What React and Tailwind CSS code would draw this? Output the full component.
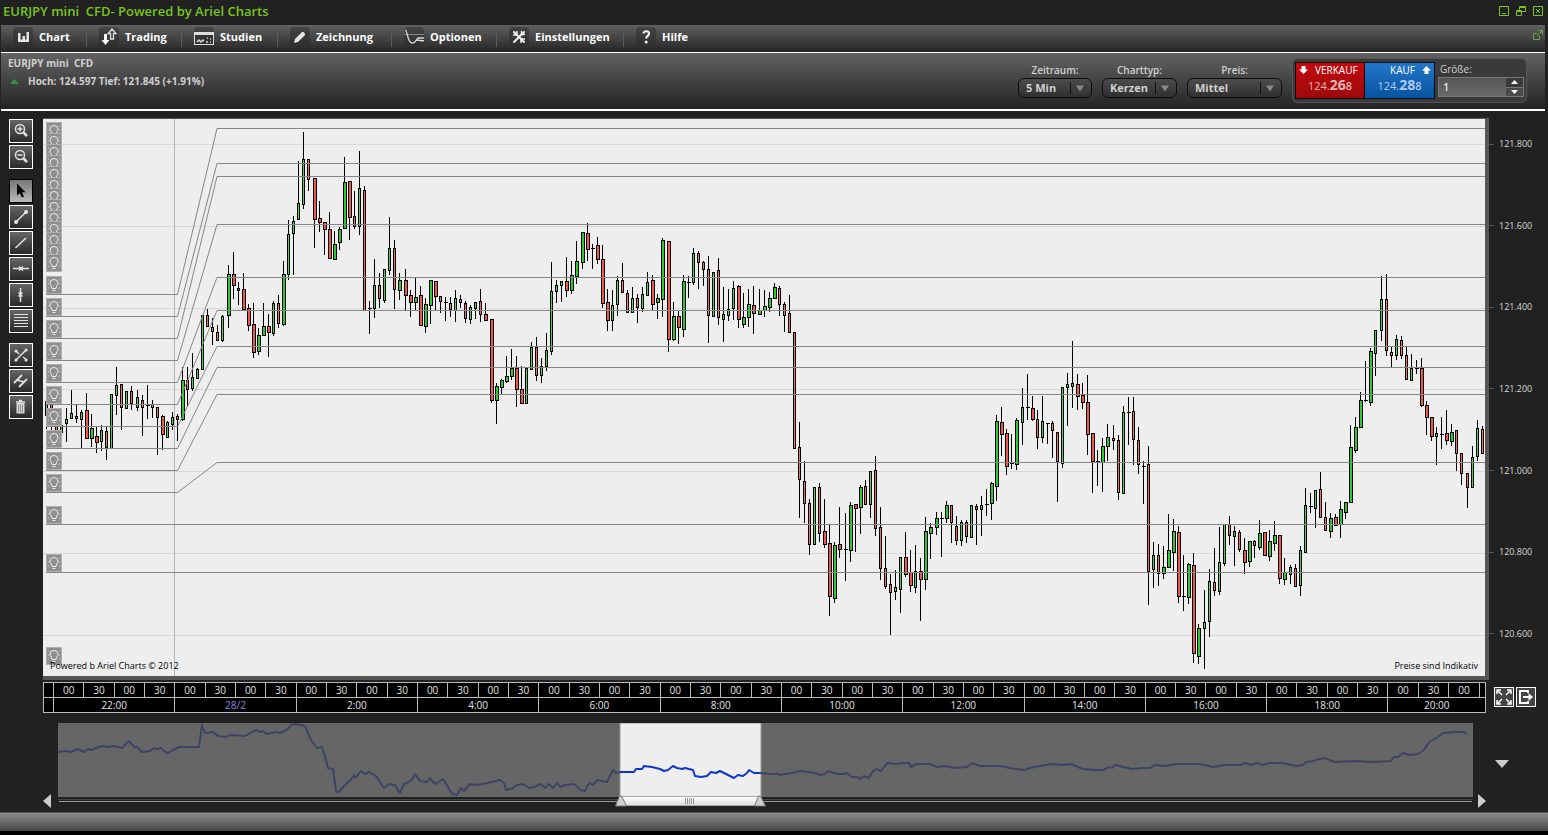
import { useState } from 'react'

// high, body top, body bottom, low, kind (g/r = up/down, capitals = wide body, d = doji)
const candleData = `
401 401 415 428 g,400 402 425 431 r,410 412 432 433 r,424 425 432 432 g,408 419 423 441 g,390 413 418 418 g,405 416 418 422 r,410 412 419 448 g,
393 410 438 438 R,414 428 438 446 G,427 436 442 452 R,425 430 441 450 g,427 431 447 459 r,394 394 448 448 g,367 385 395 414 g,384 384 407 429 r,
391 391 408 408 g,386 391 403 409 r,390 397 407 410 g,395 400 407 435 r,385 405 405 419 d,400 404 407 417 r,407 407 417 454 r,415 416 434 449 R,
421 422 437 437 g,412 417 424 429 g,414 416 419 440 r,367 380 419 420 G,367 380 389 406 r,353 377 388 390 g,368 369 378 378 g,315 315 369 369 g,
309 315 326 326 r,318 327 331 344 r,325 332 340 340 r,315 316 340 341 g,265 274 315 327 G,252 274 285 298 R,282 288 290 304 r,273 289 309 309 R,
304 308 325 330 R,303 324 352 357 R,328 335 351 354 G,303 326 335 335 G,314 326 332 356 R,301 303 333 335 g,295 303 323 327 r,261 274 324 325 G,
220 234 274 279 g,216 221 233 274 g,161 203 219 219 g,132 159 204 208 g,159 159 179 190 r,178 178 219 247 R,201 218 222 231 R,222 222 229 254 R,
212 229 258 258 R,231 244 259 259 G,227 229 242 249 G,157 182 228 228 G,181 181 217 239 R,191 216 226 228 r,151 188 226 234 g,186 190 310 310 r,
301 308 308 334 d,259 285 308 317 g,273 285 298 307 r,269 269 300 302 g,217 248 270 274 g,240 248 289 308 r,273 280 290 299 G,269 280 295 309 R,
290 295 302 316 R,278 297 302 309 G,286 295 325 325 R,298 304 326 332 G,280 280 305 323 G,281 281 296 310 R,296 296 301 312 r,297 302 302 321 d,
297 303 309 316 r,290 298 310 321 g,295 299 302 307 r,301 303 318 322 r,305 307 319 323 g,302 302 308 318 g,289 301 314 321 r,303 314 320 320 R,
319 319 400 402 R,383 386 400 423 G,379 380 387 394 G,356 376 381 382 G,349 368 376 379 G,356 368 389 406 R,366 389 403 403 R,368 368 403 403 g,
342 347 369 369 g,337 347 375 380 r,358 366 375 382 g,333 350 366 370 g,262 291 351 354 g,280 285 291 302 g,281 281 285 301 g,257 281 290 296 R,
261 275 290 293 G,241 261 276 283 G,232 232 262 268 G,223 233 249 260 R,244 248 248 269 d,237 245 259 263 R,245 259 303 307 R,289 302 320 330 R,
290 305 320 330 g,276 280 304 315 g,263 280 292 292 r,290 293 312 312 r,287 298 312 312 g,294 298 307 322 r,287 294 308 311 g,272 282 295 295 g,
275 280 304 309 R,294 298 302 318 G,238 240 299 316 G,241 241 339 351 R,302 316 339 340 G,311 316 327 343 R,275 281 329 336 G,276 282 282 298 d,
248 253 282 284 g,251 253 262 288 r,261 262 269 285 r,256 269 315 342 r,272 272 316 316 g,258 270 317 324 r,287 314 319 341 g,289 309 315 320 g,
281 288 308 319 g,285 286 319 327 R,293 317 324 327 G,289 304 317 326 G,286 305 313 333 R,289 310 314 314 G,290 306 310 316 G,292 298 307 311 G,
283 287 298 298 G,286 288 304 315 r,302 304 315 331 r,295 313 332 332 r,332 332 448 448 r,422 447 479 517 r,461 481 503 522 r,499 503 544 554 r,
487 487 544 544 g,483 487 533 541 r,499 531 544 547 R,524 543 596 615 R,542 545 598 602 G,507 544 549 557 R,513 549 549 581 d,502 505 550 561 G,
504 504 508 551 R,485 487 507 533 G,480 486 504 504 r,471 471 504 517 g,456 470 528 535 r,507 527 568 579 r,536 568 586 588 r,574 584 592 634 r,
570 587 591 599 g,557 557 589 612 g,532 557 574 576 R,550 572 585 591 R,545 571 587 592 g,558 571 579 620 R,517 531 579 589 G,523 527 533 558 G,
512 518 527 534 G,512 518 518 557 d,501 505 518 522 G,505 505 522 542 r,516 526 540 544 r,520 522 540 545 g,520 522 536 542 r,505 505 537 537 g,
504 506 509 544 r,496 505 509 535 g,489 504 504 516 d,482 483 503 519 G,415 421 486 500 G,407 422 434 455 R,429 433 466 474 R,434 463 463 469 d,
418 420 464 469 G,388 407 422 444 g,374 407 407 420 d,396 408 419 420 R,410 419 437 448 r,396 421 437 442 g,423 423 423 444 d,421 423 430 457 r,
432 432 461 501 r,387 387 463 467 g,373 384 387 425 g,341 383 386 407 g,374 384 396 409 R,383 395 402 408 R,375 402 434 454 R,433 433 461 492 R,
450 461 461 486 d,438 446 462 491 G,424 437 446 460 G,425 438 440 449 r,435 440 492 499 r,406 412 493 493 g,397 412 412 445 d,397 411 439 464 r,
427 440 464 473 r,461 466 466 504 d,446 464 571 604 r,542 555 569 587 g,544 555 573 585 r,546 567 573 578 G,514 550 567 567 G,519 531 552 570 G,
526 532 596 602 R,555 596 596 611 d,563 564 597 603 G,553 565 653 662 R,624 628 656 663 G,590 622 628 668 g,569 581 621 636 g,548 582 590 595 r,
527 562 591 594 g,524 524 563 565 g,516 524 535 544 r,526 531 536 565 g,530 532 549 551 r,538 550 562 573 R,541 541 561 566 G,540 541 545 557 r,
520 533 547 549 G,532 532 555 555 R,530 541 556 560 G,521 535 543 550 G,535 535 578 583 R,558 572 579 584 G,565 567 574 583 g,564 568 586 586 r,
546 550 585 595 g,488 505 552 552 g,493 506 506 513 d,490 490 508 527 g,472 489 517 517 r,502 517 530 530 r,513 518 531 537 G,514 517 525 525 R,
501 509 524 537 G,502 502 512 518 G,425 447 502 502 G,417 427 450 452 G,392 400 427 427 G,361 400 400 402 d,348 351 402 405 G,330 330 353 375 g,
276 299 330 340 g,274 299 350 355 r,347 352 355 366 r,335 339 355 359 g,336 340 355 358 r,347 355 379 379 r,354 368 380 380 g,360 368 368 374 d,
358 368 405 406 R,401 405 417 434 R,417 417 436 440 R,427 433 436 464 g,417 434 434 449 d,410 433 440 444 R,424 432 441 445 G,430 430 453 470 r,
453 453 473 484 r,473 473 487 507 r,446 457 487 487 g,420 428 456 460 g,426 429 453 453 r`

const candles = candleData.trim().split(',').map((row, i) => {
  const [high, top, bottom, low, kind] = row.trim().split(' ')
  return { x: Math.floor(46 + i * 5.057), high: +high, top: +top, bottom: +bottom, low: +low, kind }
})

const candleFill = { g: '#4ed257', G: '#2bcb30', r: '#f0716b', R: '#ee5650' }

// left level, right level
const pivots = [
  [294, 128], [316, 163], [338, 176], [360, 224], [382, 277],
  [404, 310], [426, 346], [448, 367], [470, 394], [492, 462]
]

const bulbs = [
  122, 133, 144, 155, 166, 177, 188, 199, 210, 221, 232, 243, 254,
  276, 298, 320, 342, 364, 386, 408, 430, 452, 474, 506, 554, 647
]

const gridLines = [144, 226, 308, 389, 471, 553, 635]
const prices = ['121.800', '121.600', '121.400', '121.200', '121.000', '120.800', '120.600']
const hours = ['22:00', '28/2', '2:00', '4:00', '6:00', '8:00', '10:00', '12:00', '14:00', '16:00', '18:00', '20:00']

const overviewLeft = '58,752 67,751 71,752 78,749 84,752 88,749 91,750 99,747 103,746 107,747 114,746 122,748 129,741 134,747 137,747 142,752 150,751 154,748 158,749 161,748 164,751 168,753 173,750 179,747 190,747 199,747 202,725 205,733 213,732 218,736 225,737 231,735 245,736 252,732 257,730 260,732 263,731 266,734 271,733 276,732 280,733 288,729 291,725 296,724 305,726 311,740 317,748 322,747 325,756 328,768 333,769 336,791 339,792 344,786 348,782 350,781 354,775 355,778 358,775 361,771 365,774 369,772 376,776 380,782 384,788 389,784 395,785 400,793 404,784 409,782 413,778 415,774 420,781 427,782 430,778 435,784 440,781 443,779 448,787 452,794 457,795 461,788 464,791 470,784 475,785 483,784 500,780 504,783 506,790 513,788 517,785 523,784 529,788 534,787 541,784 545,788 549,784 553,788 557,783 560,787 565,785 574,784 581,790 585,791 588,785 590,783 593,785 597,780 607,782 610,776 613,770 616,773 620,772'
const overviewSelected = '620,772 634,772 636,769 642,769 644,766 652,767 660,769 664,771 668,770 673,766 677,768 682,769 685,768 693,770 695,776 701,777 707,776 711,772 716,773 720,771 724,773 728,775 730,776 734,778 738,775 743,776 747,773 749,770 754,773 760,773'
const overviewRight = '760,773 770,774 778,774 780,775 785,774 792,773 800,771 810,772 815,773 820,775 825,774 828,771 834,773 840,774 844,774 847,773 852,777 858,777 860,779 864,776 869,778 873,771 876,769 881,771 887,763 895,764 905,763 909,763 911,767 917,764 930,764 937,767 945,766 954,768 967,767 972,763 980,766 993,766 1001,766 1005,767 1015,769 1025,770 1030,768 1040,766 1052,764 1062,765 1071,764 1078,767 1083,769 1095,770 1103,770 1109,767 1112,768 1115,765 1124,767 1132,769 1142,768 1150,768 1155,765 1165,766 1176,764 1190,764 1200,764 1213,767 1225,765 1240,765 1246,763 1251,765 1257,763 1262,765 1270,763 1282,763 1296,766 1303,765 1306,762 1313,761 1324,758 1335,762 1355,761 1372,762 1391,761 1394,757 1398,757 1403,753 1410,755 1418,754 1424,750 1429,742 1438,737 1443,733 1455,732 1463,732 1467,734'

const menu = [
  {
    name: 'Chart',
    width: 'w-[85px]',
    icon: <path d="M5 6v9h11V5h-2.500v7.500h-1.500V9H9.500v3.500H7.500V6z" fill="#e4e4e4" />
  },
  {
    name: 'Trading',
    width: 'w-[95px]',
    icon: (
      <>
        <path d="M5 7h3v6h2.500L6.500 18 2.500 13H5z" fill="#fff" />
        <path d="M11.500 12V6.500H9L13 2l4 4.500h-2.500V12z" fill="#444" stroke="#ddd" strokeWidth="1.300" />
      </>
    )
  },
  {
    name: 'Studien',
    width: 'w-[96px]',
    icon: (
      <>
        <rect x="0.500" y="5.500" width="19" height="12" fill="#333" stroke="#ddd" />
        <rect x="0" y="5" width="20" height="3" fill="#ddd" />
        <path d="M3 15l2-2 2 2 2-2 1 1M12 15h2M16 12h1M16 15h1M13 11h1" stroke="#ddd" fill="none" strokeWidth="1.500" />
      </>
    )
  },
  {
    name: 'Zeichnung',
    width: 'w-[114px]',
    icon: <path d="M4 16l1-4 7-7 1.500 0 1.500 1.500v1.500l-7 7z" fill="#e4e4e4" />
  },
  {
    name: 'Optionen',
    width: 'w-[105px]',
    icon: (
      <>
        <path d="M0 7.500h20" stroke="#888" />
        <path d="M1 3c3 1 2 12 7 13 3 .5 4-3 6-5h6M13 13.500c3-1 4 1 7 0" stroke="#ddd" fill="none" strokeWidth="1.300" />
      </>
    )
  },
  {
    name: 'Einstellungen',
    width: 'w-[127px]',
    icon: (
      <>
        <path d="M5 5l10 10M15 5L5 15" stroke="#f2f2f2" strokeWidth="2" strokeLinecap="round" />
        <path d="M4 8h4V4M12 16v-4h4M12.500 4v3.500H16" stroke="#f2f2f2" fill="none" strokeWidth="1.500" />
      </>
    )
  },
  {
    name: 'Hilfe',
    width: 'w-[90px]',
    icon: (
      <>
        <path d="M7.500 6.500c0-3 5.500-3 5.500 0 0 2.500-2.800 2.200-2.800 5" stroke="#f2f2f2" fill="none" strokeWidth="2.200" />
        <circle cx="10.200" cy="15" r="1.500" fill="#f2f2f2" />
      </>
    )
  }
]

const toolGroups = [
  [
    {
      name: 'Vergrößern',
      icon: <><circle cx="11" cy="10" r="4.500" /><path d="M14.500 13.500L18 17" strokeWidth="2.500" /><path d="M8.500 10h5M11 7.500v5" /></>
    },
    {
      name: 'Verkleinern',
      icon: <><circle cx="11" cy="10" r="4.500" /><path d="M14.500 13.500L18 17" strokeWidth="2.500" /><path d="M8.500 10h5" /></>
    }
  ],
  [
    { name: 'Auswahl', active: true, icon: <path d="M8 4.500v12l2.800-2.500 2 4.500 2.200-1-2-4.300h3.500z" fill="#000" stroke="none" /> },
    { name: 'Strecke', icon: <><path d="M7 17L17 7" /><path d="M7 17h.1M17 7h.1" strokeWidth="4" strokeLinecap="round" /></> },
    { name: 'Gerade', icon: <path d="M6.500 17L17 7" strokeWidth="1.500" /> },
    { name: 'Horizontale', icon: <path d="M4 11.500h16M10 9.500l4 4M14 9.500l-4 4" /> },
    { name: 'Vertikale', icon: <path d="M11.500 5v14M9.500 9.500l4 4M13.500 9.500l-4 4" /> },
    { name: 'Fibonacci', icon: <path d="M5 5.500h14M5 8.500h14M5 11.500h14M5 14.500h14M5 17.500h14" strokeWidth="1" /> }
  ],
  [
    {
      name: 'Linien löschen',
      icon: <><path d="M6 18L17 7M7 8l3 3M14 14l4 3" /><path d="M7 17h.1M17 7h.1M7 8h.1M17 17h.1" strokeWidth="3" strokeLinecap="round" /></>
    },
    { name: 'Kanal', icon: <path d="M5 14L13 6M10 18l8-8M8 11l7 2" strokeWidth="1.800" /> },
    {
      name: 'Papierkorb',
      icon: <><path d="M7.500 8h8v10.500h-8z" fill="#ddd" stroke="none" /><path d="M7 7h9M10 5.500h3" /><path d="M9.500 9.500v8M11.500 9.500v8M13.500 9.500v8" stroke="#888" strokeWidth="1" /></>
    }
  ]
]

function TitleBar() {
  return (
    <div className="flex h-[25px] items-start justify-between pl-[3px] pr-[5px]">
      <h1 className="whitespace-pre text-[13px] font-semibold leading-[22px] text-[#78c51b]">EURJPY mini  CFD- Powered by Ariel Charts</h1>
      <div className="flex gap-[7px] pt-1.5">
        <button type="button" aria-label="Minimieren">
          <svg className="block" width="10" height="10" fill="none" stroke="#78c51b"><path d="M.5.500h9v9h-9zM3 7.500h4" /></svg>
        </button>
        <button type="button" aria-label="Wiederherstellen">
          <svg className="block" width="10" height="10" fill="none" stroke="#78c51b"><path d="M.5 4.500h5v5h-5zM3.500 4V.5h6v5H6M3 1.500h7M0 5.500h6" /></svg>
        </button>
        <button type="button" aria-label="Schließen">
          <svg className="block" width="10" height="10" fill="none" stroke="#78c51b"><path d="M.5.500h9v9h-9zM3 3l4 4M7 3L3 7" /></svg>
        </button>
      </div>
    </div>
  )
}

function MenuBar() {
  return (
    <nav className="ml-px mr-[3px] flex h-[27px] items-start justify-between bg-gradient-to-b from-[#606060] to-[#262626] pt-0.5">
      <div className="flex">
        {menu.map((item, i) => (
          <button
            key={item.name}
            type="button"
            className={`${item.width} flex h-5 shrink-0 items-center gap-1.5 pl-3 text-left text-[11px] font-bold text-white ${
              i ? 'border-l border-[#5c5c5c]' : ''
            }`}
          >
            <span className="rounded bg-[#2c2c2c]/50">
              <svg className="block" width="20" height="20" viewBox="0 0 20 20">{item.icon}</svg>
            </span>
            {item.name}
          </button>
        ))}
      </div>
      <button type="button" aria-label="Fenster lösen" className="mr-[2px] pt-[3px]">
        <svg className="block" width="10" height="10" fill="none" stroke="#5fae3a"><path d="M4 3.500H.5v6h6V6M4 6l5-5M5.500.500h4v4" /></svg>
      </button>
    </nav>
  )
}

function Dropdown({ id, label, value, width }) {
  return (
    <div className={`${width} flex flex-col text-[#d0d0d0]`}>
      <label htmlFor={id} className="text-center text-[10px] font-semibold leading-4">{label}</label>
      <div className="relative">
        <select
          id={id}
          className="block h-5 w-full appearance-none rounded-md border border-[#0c0c0c] bg-gradient-to-b from-[#4c4c4c] to-[#303030] pl-[7px] pr-6 text-[11px] font-bold leading-4"
        >
          <option>{value}</option>
        </select>
        <svg className="pointer-events-none absolute right-0 top-0" width="24" height="20">
          <path d="M2.500 4v12" stroke="#111" />
          <path d="M8 7.500h8l-4 6z" fill="#888" />
        </svg>
      </div>
    </div>
  )
}

function OrderButtons() {
  const [size, setSize] = useState('1')
  return (
    <div className="flex h-[45px] w-[235px] rounded-md border border-[#555] bg-[#3a3a3a] pl-[2px] pt-[3px]">
      <button type="button" className="flex h-[37px] w-[70px] flex-col items-center justify-start border border-[#1a0505] bg-gradient-to-b from-[#c4090d] to-[#9c0a0c] text-[#e3b6b4]">
        <span className="flex h-3.5 w-full shrink-0 items-center gap-[7px] pl-[3px] text-[10px] leading-[14px] text-white">
          <svg width="9" height="8"><path d="M2.500 0h4v3.500H9L4.500 8 0 3.500h2.500z" fill="#fff" /></svg>
          VERKAUF
        </span>
        <span className="text-[11px] leading-[18px]">124.<span className="text-sm font-bold leading-4">26</span><span className="font-semibold">8</span></span>
      </button>
      <button type="button" className="flex h-[37px] w-[70px] flex-col items-center justify-start border border-l-0 border-[#050f1f] bg-gradient-to-b from-[#2376cb] to-[#07539f] text-[#b0cdec]">
        <span className="flex h-3.5 w-full shrink-0 items-center justify-end gap-[7px] pr-[3px] text-[10px] leading-[14px] text-white">
          KAUF
          <svg width="9" height="8"><path d="M2.500 8h4V4.500H9L4.500 0 0 4.500h2.500z" fill="#fff" /></svg>
        </span>
        <span className="text-[11px] leading-[18px]">124.<span className="text-sm font-bold leading-4">28</span><span className="font-semibold">8</span></span>
      </button>
      <div className="ml-[3px] w-[86px]">
        <label htmlFor="size" className="block pl-0.5 text-[10px] leading-[15px] text-[#d0d0d0]">Größe:</label>
        <div className="flex h-5 border border-[#777]">
          <input
            id="size"
            value={size}
            onChange={(e) => setSize(e.target.value)}
            className="w-full min-w-0 flex-1 bg-gradient-to-b from-[#555] to-[#6a6a6a] pl-1 text-[11px] font-semibold text-[#e0e0e0] outline-none"
          />
          <div className="flex w-[17px] flex-col">
            <button type="button" aria-label="Mehr" onClick={() => setSize(String(+size + 1))} className="flex flex-1 items-center justify-center bg-[#3a3a3a]">
              <svg width="7" height="4"><path d="M0 4h7L3.500 0z" fill="#fff" /></svg>
            </button>
            <button type="button" aria-label="Weniger" onClick={() => setSize(String(+size - 1))} className="flex flex-1 items-center justify-center border-t border-[#777] bg-[#4a4a4a]">
              <svg width="7" height="4"><path d="M0 0h7L3.500 4z" fill="#fff" /></svg>
            </button>
          </div>
        </div>
      </div>
    </div>
  )
}

function InfoBar() {
  return (
    <header className="ml-px mr-[3px] flex h-[59px] justify-between border-b-2 border-t border-white bg-gradient-to-b from-[#636363] to-[#242424] pl-[7px] pr-[18px] text-[#d0d0d0]">
      <div>
        <div className="whitespace-pre pt-[2px] text-[10px] font-bold leading-4">EURJPY mini  CFD</div>
        <div className="flex items-center gap-[9px] pl-0.5 pt-[2px] text-[10px] font-bold leading-4">
          <svg width="9" height="5"><path d="M0 5h9L4.500 0z" fill="#3c8f42" /></svg>
          Hoch: 124.597 Tief: 121.845 (+1.91%)
        </div>
      </div>
      <div className="flex">
        <div className="flex gap-2.5 pr-2.5 pt-[9px]">
          <Dropdown id="period" label="Zeitraum:" value="5 Min" width="w-[74px]" />
          <Dropdown id="type" label="Charttyp:" value="Kerzen" width="w-[75px]" />
          <Dropdown id="price" label="Preis:" value="Mittel" width="w-[95px]" />
        </div>
        <div className="pt-[5px]">
          <OrderButtons />
        </div>
      </div>
    </header>
  )
}

function Toolbar() {
  return (
    <div className="flex w-[43px] shrink-0 flex-col gap-2.5 pl-[9px] pt-2">
      {toolGroups.map((group) => (
        <div key={group[0].name} className="flex flex-col gap-0.5">
          {group.map((tool) => (
            <button
              key={tool.name}
              type="button"
              aria-label={tool.name}
              className={`flex h-6 w-6 items-center justify-center border ${
                tool.active
                  ? 'border-black bg-gradient-to-b from-[#777] to-[#bbb]'
                  : 'border-white bg-gradient-to-b from-[#666] to-[#2a2a2a]'
              }`}
            >
              <svg className="shrink-0" width="24" height="24" viewBox="0 0 24 24" fill="none" stroke="#e2e2e2" strokeWidth="1.500">{tool.icon}</svg>
            </button>
          ))}
        </div>
      ))}
    </div>
  )
}

function Candle({ x, high, top, bottom, low, kind }) {
  if (kind === 'd') {
    return <path d={`M${x} ${high}h1V${low}h-1zM${x - 1} ${top}h4v1h-4z`} />
  }
  const wide = kind === 'G' || kind === 'R'
  return (
    <g>
      <rect x={x} y={high} width="1" height={low - high + 1} />
      <rect x={x - 1} y={top} width={wide ? 4 : 3} height={bottom - top + 1} />
      <rect x={x} y={top + 1} width={wide ? 2 : 1} height={Math.max(bottom - top - 1, 1)} fill={candleFill[kind]} />
    </g>
  )
}

function Chart() {
  return (
    <div className="relative min-w-0 flex-1 border-b-4 border-r-4 border-t border-[#555] bg-[#eee] text-[9px] leading-4 text-black">
      <svg className="block h-[557px] w-full" viewBox="43 119 1442 557" preserveAspectRatio="none">
        {gridLines.map((y) => (
          <rect key={y} x="43" y={y} width="1442" height="1" fill="#d8d8d8" />
        ))}
        <rect x="174" y="119" width="1" height="557" fill="#b4b4b4" />
        <g shapeRendering="crispEdges">
          {candles.map((candle) => <Candle key={candle.x} {...candle} />)}
        </g>
        <g fill="none" stroke="#868686">
          {pivots.map(([from, to]) => (
            <path key={from} d={`M46 ${from + 0.5}H177.500L217 ${to + 0.5}H1485`} />
          ))}
          <path d="M46 524.500H1485M46 572.500H1485" />
        </g>
        {bulbs.map((y) => (
          <g key={y} transform={`translate(46 ${y})`}>
            <rect width="16" height="18" fill="#b0b0b0" />
            <rect x="1" y="1" width="14" height="16" fill="#8f8f8f" />
            <path d="M6 12.500C6 10 4 9.500 4 7a4 3.500 0 0 1 8 0c0 2.500-2 3-2 5.500zM6.500 14.500h3" fill="none" stroke="#eee" />
            <path d="M2 4h1M2 8h1M2 12h1M13 4h1M13 8h1M13 12h1" stroke="#ccc" />
          </g>
        ))}
      </svg>
      <span className="absolute bottom-[2px] left-[7px]">Powered b Ariel Charts © 2012</span>
      <span className="absolute bottom-[2px] right-[7px]">Preise sind Indikativ</span>
    </div>
  )
}

function PriceScale() {
  return (
    <div className="flex w-[59px] shrink-0 flex-col justify-between pb-[38px] pt-[18px]">
      {prices.map((price) => (
        <div key={price} className="flex items-center gap-[5px] text-[9px] leading-4 text-[#d8d8d8]">
          <span className="h-px w-[5px] bg-[#555]" />
          {price}
        </div>
      ))}
    </div>
  )
}

function TimeAxis() {
  const slots = Array.from({ length: 47 }, (_, i) => (i % 2 ? '30' : '00'))
  return (
    <table className="min-w-0 flex-1 table-fixed border-collapse bg-black text-center text-[10px] leading-[14px] text-[#e4e4e4]">
      <colgroup>
        <col className="w-[10px]" />
        {slots.map((_, i) => <col key={i} />)}
        <col className="w-[6px]" />
      </colgroup>
      <tbody>
        <tr>
          <td className="border border-[#bbb] p-0" />
          {slots.map((slot, i) => <td key={i} className="h-[15px] border border-[#bbb] p-0">{slot}</td>)}
          <td className="border border-[#bbb] p-0" />
        </tr>
        <tr>
          <td className="border border-[#bbb] p-0" />
          {hours.map((hour) => (
            <td key={hour} colSpan={4} className={`h-[15px] border border-[#bbb] p-0 ${hour === '28/2' ? 'text-[#8f84e0]' : ''}`}>{hour}</td>
          ))}
        </tr>
      </tbody>
    </table>
  )
}

function Overview() {
  return (
    <div className="flex items-end pt-2.5">
      <div className="flex w-[58px] shrink-0 pb-px pl-[43px]">
        <button type="button" aria-label="Zurück">
          <svg className="block" width="8" height="14"><path d="M8 0v14L0 7z" fill="#ccc" /></svg>
        </button>
      </div>
      <svg className="block h-[86px] min-w-0 flex-1" viewBox="58 723 1415 86" preserveAspectRatio="none">
        <defs>
          <linearGradient id="thumb" x2="0" y2="1">
            <stop stopColor="#fff" />
            <stop offset="1" stopColor="#ddd" />
          </linearGradient>
        </defs>
        <rect x="58" y="723" width="1415" height="74" fill="#666" />
        <rect x="58" y="799" width="1415" height="1" fill="#444" />
        <rect x="59" y="801" width="1413" height="1" fill="#999" />
        <rect x="620" y="723" width="141" height="74" fill="#eee" stroke="#999" />
        <g fill="none" stroke="#3c4566" strokeWidth="2" strokeLinejoin="round">
          <polyline points={overviewLeft} />
          <polyline points={overviewRight} />
          <polyline points={overviewSelected} stroke="#0f37c8" />
        </g>
        <rect x="620.500" y="796.500" width="139" height="9" fill="url(#thumb)" stroke="#aaa" />
        <path d="M685.500 798v6M687.500 798v6M689.500 798v6M691.500 798v6M693.500 798v6" stroke="#999" />
        <path d="M615.500 806l4-10h2l5 10zM754.500 806l4-10h2l5 10z" fill="#d0d0d0" stroke="#777" />
      </svg>
      <div className="flex w-[75px] shrink-0 items-end pb-px pl-[5px]">
        <button type="button" aria-label="Weiter">
          <svg className="block" width="8" height="14"><path d="M0 0v14l8-7z" fill="#ccc" /></svg>
        </button>
        <button type="button" aria-label="Übersicht ausblenden" className="pb-10 pl-[9px]">
          <svg className="block" width="14" height="8"><path d="M0 0h14L7 8z" fill="#ccc" /></svg>
        </button>
      </div>
    </div>
  )
}

function App() {
  return (
    <div className="flex min-h-screen flex-col bg-[#212121] font-['Open_Sans','Noto_Sans',sans-serif]">
      <TitleBar />
      <MenuBar />
      <InfoBar />
      <main>
        <div className="flex">
          <Toolbar />
          <div className="flex min-w-0 flex-1 pt-[7px]">
            <Chart />
            <PriceScale />
          </div>
        </div>
        <div className="flex pl-[43px] pt-0.5">
          <TimeAxis />
          <div className="flex w-[62px] shrink-0 gap-0.5 pl-2 pt-[5px]">
            <button type="button" aria-label="Vollbild" className="h-5 w-5 border border-white bg-[#444]">
              <svg className="block" width="18" height="18" fill="none" stroke="#fff" strokeWidth="1.500"><path d="M2 6V2h4M12 2h4v4M16 12v4h-4M6 16H2v-4M2 2l5 5M16 2l-5 5M16 16l-5-5M2 16l5-5" /></svg>
            </button>
            <button type="button" aria-label="Exportieren" className="h-5 w-5 border border-white bg-[#444]">
              <svg className="block" width="18" height="18" fill="none" stroke="#fff" strokeWidth="2"><path d="M11 5V3H3v12h8v-2M6 9h7" /><path d="M11.500 5v8L16 9z" fill="#fff" stroke="none" /></svg>
            </button>
          </div>
        </div>
        <Overview />
      </main>
      <footer className="mt-[3px] h-[19px] border-t border-[#555] bg-gradient-to-b from-[#8c8c8c] to-[#484848]" />
      <div className="min-h-1 flex-1 bg-black" />
    </div>
  )
}

export default App
